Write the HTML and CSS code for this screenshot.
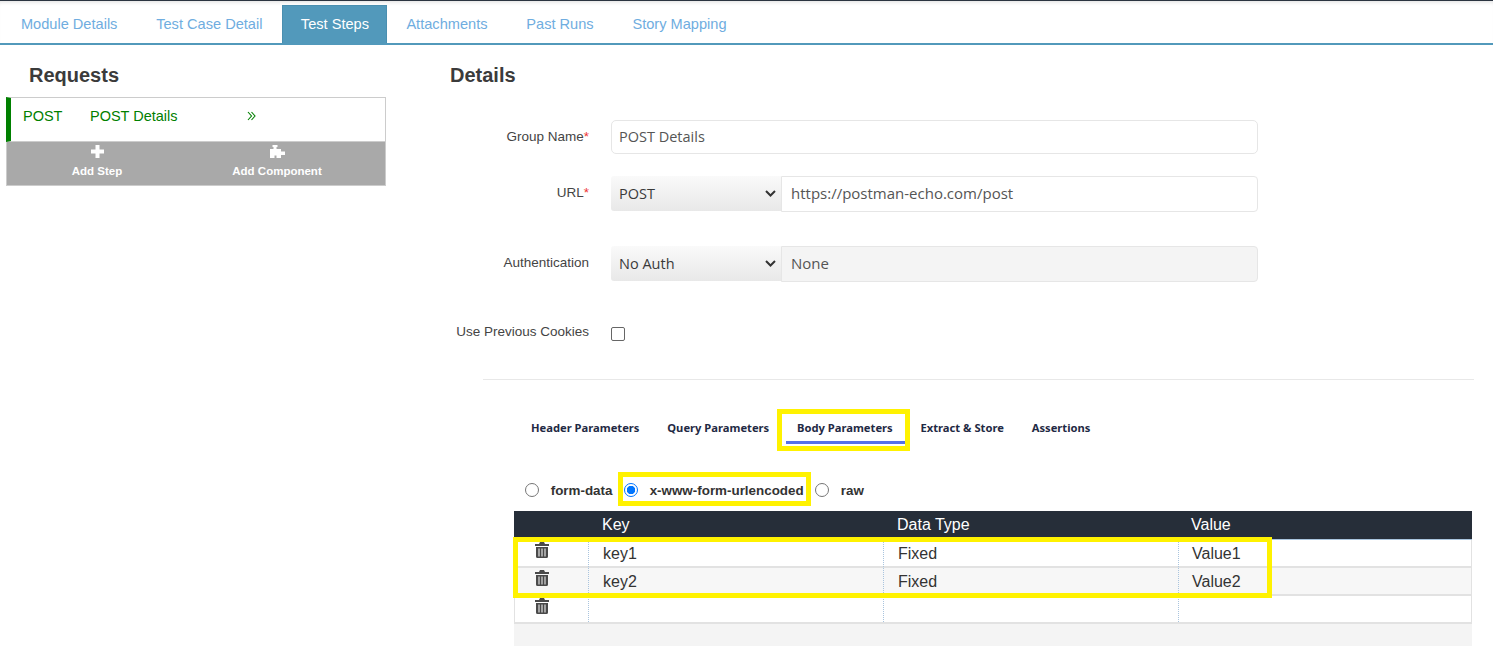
FILE: index.html
```html
<!DOCTYPE html>
<html lang="en">
<head>
    <meta charset="UTF-8">
    <meta name="viewport" content="width=device-width, initial-scale=1.0">
    <title>Test Steps</title>
    <link rel="stylesheet" href="styles.css">
</head>
<body>
    <svg width="0" height="0" class="defs">
        <symbol id="trash" viewBox="0 0 14 16">
            <path d="M5 0h4l1 2h4v2H0V2h4z"/>
            <path fill-rule="evenodd" d="M1 5h12v9.500q0 1.500-1.500 1.500h-9Q1 16 1 14.500zM3.500 6.500v8h1v-8zM6.500 6.500v8h1v-8zM9.500 6.500v8h1v-8z"/>
        </symbol>
    </svg>

    <nav class="main-tabs">
        <a class="main-tab">Module Details</a>
        <a class="main-tab">Test Case Detail</a>
        <a class="main-tab active">Test Steps</a>
        <a class="main-tab">Attachments</a>
        <a class="main-tab">Past Runs</a>
        <a class="main-tab">Story Mapping</a>
    </nav>

    <div class="content">
        <aside class="requests">
            <h2 class="requests-title">Requests</h2>
            <div class="request-item">
                <span class="request-method">POST</span>
                <span class="request-name">POST Details</span>
                <svg class="request-arrow" width="9" height="10" viewBox="0 0 9 10" fill="none" stroke="currentColor" stroke-width="1.100">
                    <path d="M1 1l3.500 4L1 9M4.500 1L8 5 4.500 9"/>
                </svg>
            </div>
            <div class="request-actions">
                <button class="action-button">
                    <svg width="13" height="13" viewBox="0 0 13 13" fill="#fff"><path d="M4.500 0h4v4.500H13v4H8.500V13h-4V8.500H0v-4h4.500z"/></svg>
                    <span>Add Step</span>
                </button>
                <button class="action-button">
                    <svg width="15" height="13" viewBox="0 0 15 13" fill="#fff"><path d="M2.500 0h5v2H6.500v2H11v2.500h4V10h-4v3H6.500v-2.500h-2V13H0V4h3.500V2h-1z"/></svg>
                    <span>Add Component</span>
                </button>
            </div>
        </aside>

        <main class="details">
            <h2 class="details-title">Details</h2>

            <div class="form-row row-group">
                <label class="form-label">Group Name<span class="required">*</span></label>
                <div class="field text-field">POST Details</div>
            </div>
            <div class="form-row row-url">
                <label class="form-label">URL<span class="required">*</span></label>
                <div class="field-group">
                    <div class="select-field">POST<svg class="chevron" width="11" height="7" viewBox="0 0 11 7" fill="none" stroke="#333" stroke-width="2"><path d="M1 1l4.500 4.500L10 1"/></svg></div>
                    <div class="field addon">https://postman-echo.com/post</div>
                </div>
            </div>
            <div class="form-row row-auth">
                <label class="form-label">Authentication</label>
                <div class="field-group">
                    <div class="select-field">No Auth<svg class="chevron" width="11" height="7" viewBox="0 0 11 7" fill="none" stroke="#333" stroke-width="2"><path d="M1 1l4.500 4.500L10 1"/></svg></div>
                    <div class="field addon disabled">None</div>
                </div>
            </div>
            <div class="form-row row-cookies">
                <label class="form-label">Use Previous Cookies</label>
                <span class="checkbox"></span>
            </div>

            <hr class="divider">

            <div class="param-section">
                <div class="param-tabs">
                    <a class="param-tab">Header Parameters</a>
                    <a class="param-tab">Query Parameters</a>
                    <a class="param-tab active">Body Parameters</a>
                    <a class="param-tab">Extract &amp; Store</a>
                    <a class="param-tab">Assertions</a>
                </div>

                <div class="body-types">
                    <span class="radio"></span><span class="radio-label">form-data</span>
                    <span class="radio checked"></span><span class="radio-label">x-www-form-urlencoded</span>
                    <span class="radio"></span><span class="radio-label">raw</span>
                </div>

                <div class="param-table">
                    <div class="table-head">
                        <span></span><span>Key</span><span>Data Type</span><span>Value</span>
                    </div>
                    <div class="table-row">
                        <span class="cell cell-icon"><svg width="14" height="16" fill="#4a4a4a"><use href="#trash"/></svg></span>
                        <span class="cell">key1</span><span class="cell">Fixed</span><span class="cell">Value1</span>
                    </div>
                    <div class="table-row alt">
                        <span class="cell cell-icon"><svg width="14" height="16" fill="#4a4a4a"><use href="#trash"/></svg></span>
                        <span class="cell">key2</span><span class="cell">Fixed</span><span class="cell">Value2</span>
                    </div>
                    <div class="table-row">
                        <span class="cell cell-icon"><svg width="14" height="16" fill="#4a4a4a"><use href="#trash"/></svg></span>
                        <span class="cell"></span><span class="cell"></span><span class="cell"></span>
                    </div>
                    <div class="table-foot"></div>
                </div>
            </div>
        </main>
    </div>

    <!-- yellow annotation boxes drawn on top of the screenshot -->
    <div class="mark mark-tab"></div>
    <div class="mark mark-radio"></div>
    <div class="mark mark-rows"></div>
</body>
</html>
```

FILE: styles.css
```css
body {
    margin: 0;
    height: 646px;
    overflow: hidden;
    position: relative;
    background: #fff;
    font-family: "Liberation Sans", Arial, sans-serif;
    color: #333;
}
.defs {
    position: absolute;
}
.main-tabs {
    display: flex;
    height: 42px;
    padding-left: 1.500px;
    border-top: 1px solid #2b3440;
    border-bottom: 2px solid #5299bb;
    box-shadow: inset 0 4px 4px -3px #ddd;
}
.main-tab {
    margin-top: 4px;
    padding: 0 19.400px;
    line-height: 38px;
    font-size: 14.600px;
    color: #6fade0;
}
.main-tab.active {
    padding: 0 17px 0 18px;
    background-color: #5299bb;
    border: 1px solid #4a8fb0;
    border-bottom: none;
    color: #fff;
    line-height: 36px;
}
.content {
    display: flex;
}
.requests {
    width: 380px;
    margin-left: 6px;
    flex-shrink: 0;
}
.requests-title {
    margin: 19px 0 10px 23px;
    font-size: 20px;
    line-height: 23px;
    color: #3b3b3b;
}
.request-item {
    display: flex;
    align-items: flex-start;
    height: 45px;
    box-sizing: border-box;
    padding: 10px 0 0 12px;
    border: 1px solid #ccc;
    border-left: 5px solid #008000;
    color: #008000;
    font-size: 14.500px;
    line-height: 17px;
}
.request-method {
    width: 67px;
}
.request-name {
    width: 157px;
}
.request-arrow {
    margin-top: 3px;
}
.request-actions {
    display: flex;
    height: 44px;
    box-sizing: border-box;
    background-color: #a9a9a9;
    border: 1px solid #ccc;
    border-top: none;
}
.action-button {
    width: 180px;
    display: flex;
    flex-direction: column;
    align-items: center;
    padding: 3px 0 0;
    background: none;
    border: none;
    color: #fff;
    font: bold 11.500px "Liberation Sans", Arial, sans-serif;
}
.action-button span {
    margin-top: 7px;
}
.details {
    flex: 1;
    margin-left: 64px;
}
.details-title {
    margin: 19px 0 0;
    font-size: 20px;
    line-height: 23px;
    color: #3b3b3b;
}
.form-row {
    display: flex;
    align-items: flex-start;
}
.row-group { margin-top: 33px; }
.row-url { margin-top: 22px; }
.row-auth { margin-top: 34px; }
.row-cookies { margin-top: 41px; }
.form-label {
    width: 139px;
    margin-right: 22px;
    padding-top: 9px;
    text-align: right;
    font-size: 13.500px;
    line-height: 16px;
    color: #444;
    white-space: nowrap;
}
.row-cookies .form-label {
    padding-top: 1px;
}
.required {
    color: #e33;
}
.field {
    height: 34px;
    box-sizing: border-box;
    padding: 0 7px;
    font-family: "Open Sans", sans-serif;
    font-size: 14.500px;
    line-height: 32px;
    color: #555;
    background: #fff;
    border: 1px solid #e6e6e6;
}
.text-field {
    width: 647px;
    border-radius: 5px;
}
.field-group {
    display: flex;
    width: 647px;
    height: 36px;
}
.select-field {
    width: 170px;
    height: 35px;
    box-sizing: border-box;
    padding-left: 8px;
    display: flex;
    align-items: center;
    justify-content: space-between;
    font-family: "Open Sans", sans-serif;
    font-size: 14.500px;
    color: #3a3a3a;
    background: linear-gradient(#fafafa, #e8e8e8);
    border-radius: 3px 0 0 3px;
}
.chevron {
    margin-right: 5px;
}
.addon {
    flex: 1;
    height: 36px;
    padding-left: 9px;
    font-size: 15px;
    line-height: 32px;
    border-radius: 0 4px 4px 0;
}
.addon.disabled {
    background-color: #f4f4f4;
}
.checkbox {
    width: 12px;
    height: 12px;
    margin-top: 4px;
    border: 1px solid #666;
    border-radius: 2px;
}
.divider {
    margin: 38px 19px 0 33px;
    border: none;
    border-top: 1px solid #e8e8e8;
}
.param-section {
    margin-left: 64px;
    width: 958px;
}
.param-tabs {
    display: flex;
    margin-top: 39px;
    height: 18px;
    padding-left: 17px;
    gap: 27.800px;
}
.param-tab {
    position: relative;
    font-family: "Noto Sans", sans-serif;
    font-size: 11.200px;
    font-weight: bold;
    line-height: 18px;
    color: #1f2a44;
    white-space: nowrap;
}
.param-tab.active::after {
    content: "";
    position: absolute;
    left: -11px;
    right: -12px;
    top: 22px;
    height: 3px;
    background-color: #5470ea;
}
.body-types {
    display: flex;
    align-items: center;
    margin-top: 43px;
    height: 20px;
    padding-left: 11px;
}
.radio {
    width: 12px;
    height: 12px;
    border: 1px solid #767676;
    border-radius: 50%;
    background: #fff;
}
.radio.checked {
    border-color: #0075ff;
    background: radial-gradient(circle, #0075ff 0 4px, #fff 4.500px);
}
.radio-label {
    margin: 0 11.500px 0 11.700px;
    font-size: 13.400px;
    font-weight: bold;
    color: #333;
}
.param-table {
    margin-top: 11px;
    font-size: 16px;
}
.table-head,
.table-row {
    display: grid;
}
.table-head {
    grid-template-columns: 74px 295px 294px 1fr;
    height: 29px;
    background-color: #262e39;
    border-bottom: 1px solid #a9c4de;
    box-sizing: border-box;
    color: #fff;
    line-height: 28px;
}
.table-head span {
    padding-left: 14px;
}
.table-row {
    grid-template-columns: 73px 295px 295px 1fr;
    height: 28px;
    box-sizing: border-box;
    border: 1px solid #e2e2e2;
    border-width: 0 1px 2px;
    color: #333;
}
.table-row.alt {
    background-color: #f7f7f7;
}
.table-row:last-of-type {
    border-bottom-width: 1px;
}
.cell {
    padding-left: 14px;
    line-height: 27px;
    border-left: 1px dotted #a9c4de;
}
.cell:last-child {
    padding-left: 13px;
}
.cell-icon {
    border-left: none;
    padding: 2px 0 0 20px;
    line-height: 0;
}
.table-foot {
    height: 23px;
    background-color: #f4f4f4;
}
.mark {
    position: absolute;
    box-sizing: border-box;
    border: 5px solid #fff200;
}
.mark-tab {
    left: 777px;
    top: 409px;
    width: 133px;
    height: 42px;
}
.mark-radio {
    left: 618px;
    top: 472px;
    width: 193px;
    height: 34px;
}
.mark-rows {
    left: 513px;
    top: 537px;
    width: 759px;
    height: 61px;
}
```
